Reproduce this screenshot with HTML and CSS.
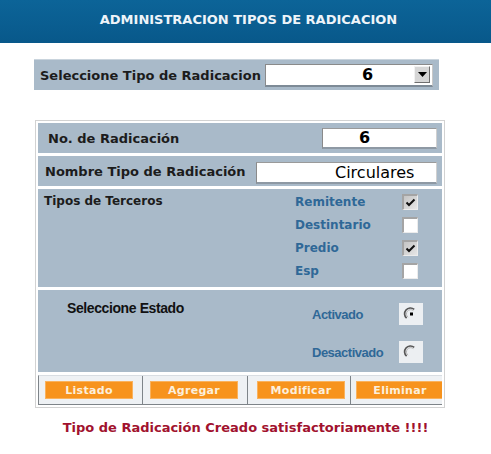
FILE: index.html
```html
<!DOCTYPE html>
<html lang="es">
<head>
<meta charset="utf-8">
<title>Administracion Tipos de Radicacion</title>
<link rel="stylesheet" href="styles.css">
</head>
<body>
<header class="topbar">
  <h1 class="title">ADMINISTRACION TIPOS DE RADICACION</h1>
</header>

<section class="selector">
  <span class="sel-label">Seleccione Tipo de Radicacion</span>
  <div class="select">
    <span class="select-value">6</span>
    <span class="select-btn"><svg width="9" height="5" viewBox="0 0 9 5"><path d="M0 0H9L4.5 5Z" fill="#000"/></svg></span>
  </div>
</section>

<div class="form">
  <div class="row row-num">
    <span class="lbl">No. de Radicación</span>
    <div class="input input-num">6</div>
  </div>
  <div class="row row-name">
    <span class="lbl">Nombre Tipo de Radicación</span>
    <div class="input input-name">Circulares</div>
  </div>
  <div class="row row-terceros">
    <span class="lbl lbl-sm">Tipos de Terceros</span>
    <ul class="opts">
      <li class="opt"><span class="opt-lbl">Remitente</span><span class="chk checked"><svg width="11" height="9" viewBox="0 0 11 9"><path d="M1.5 4.5L4 7L9.5 1.5" fill="none" stroke="#111" stroke-width="2"/></svg></span></li>
      <li class="opt"><span class="opt-lbl">Destintario</span><span class="chk"></span></li>
      <li class="opt"><span class="opt-lbl">Predio</span><span class="chk checked"><svg width="11" height="9" viewBox="0 0 11 9"><path d="M1.5 4.5L4 7L9.5 1.5" fill="none" stroke="#111" stroke-width="2"/></svg></span></li>
      <li class="opt"><span class="opt-lbl">Esp</span><span class="chk"></span></li>
    </ul>
  </div>
  <div class="row row-estado">
    <span class="lbl-arial">Seleccione Estado</span>
    <ul class="radios">
      <li class="radio-item"><span class="radio-lbl">Activado</span><span class="radio"><svg width="24" height="22" viewBox="0 0 24 22"><path d="M7.6 15.2A5.8 5.8 0 0 1 15.2 6.4" fill="none" stroke="#555" stroke-width="1.7"/><path d="M9 14.2A4.2 4.2 0 0 1 14.4 7.6" fill="none" stroke="#b4b4b4" stroke-width="1"/><rect x="11" y="9.5" width="3" height="3" fill="#000"/></svg></span></li>
      <li class="radio-item"><span class="radio-lbl">Desactivado</span><span class="radio"><svg width="24" height="22" viewBox="0 0 24 22"><path d="M7.6 15.2A5.8 5.8 0 0 1 15.2 6.4" fill="none" stroke="#555" stroke-width="1.7"/><path d="M9 14.2A4.2 4.2 0 0 1 14.4 7.6" fill="none" stroke="#b4b4b4" stroke-width="1"/></svg></span></li>
    </ul>
  </div>
  <div class="row row-actions">
    <div class="cell cell-1"><button class="btn">Listado</button></div>
    <div class="cell cell-2"><button class="btn">Agregar</button></div>
    <div class="cell cell-3"><button class="btn">Modificar</button></div>
    <div class="cell cell-4"><button class="btn">Eliminar</button></div>
  </div>
</div>

<p class="msg">Tipo de Radicación Creado satisfactoriamente !!!!</p>
</body>
</html>
```

FILE: styles.css
```css
* { box-sizing: border-box; }

body {
  margin: 0;
  background: #fff;
  font-family: "DejaVu Sans", Verdana, sans-serif;
  color: #1a1a1a;
}

.topbar {
  height: 43px;
  background: linear-gradient(180deg, #0c6498 0%, #0a5d90 60%, #08588a 100%);
  display: flex;
  align-items: center;
  justify-content: center;
  padding: 0 0 4px 6px;
}

.title {
  margin: 0;
  font-size: 13px;
  font-weight: bold;
  color: #eef4f9;
}

.selector {
  margin: 16px 0 0 34px;
  width: 405px;
  height: 31px;
  background: #a9bac9;
  border-top: 1px solid #c9d4dd;
  display: flex;
  align-items: center;
  justify-content: space-between;
  padding: 0 6px;
}

.sel-label {
  font-size: 13px;
  font-weight: bold;
  color: #1c1c1c;
}

.select {
  width: 168px;
  height: 23px;
  background: #fff;
  border-style: solid;
  border-width: 1px 1px 2px 1px;
  border-color: #8a8a8a #c8c8c8 #7d8a96 #8a8a8a;
  display: flex;
  align-items: center;
  padding-left: 96px;
  position: relative;
}

.select-value {
  font-size: 16px;
  font-weight: bold;
  color: #000;
}

.select-btn {
  position: absolute;
  right: 2px;
  top: 1px;
  width: 16px;
  height: 17px;
  background: #d6d6d6;
  border-style: solid;
  border-width: 1px;
  border-color: #f2f2f2 #6e6e6e #6e6e6e #f2f2f2;
  display: flex;
  align-items: center;
  justify-content: center;
}

.form {
  margin: 30px 0 0 35px;
  width: 410px;
  border: 1px solid #d2d2d2;
  padding: 2px;
  display: flex;
  flex-direction: column;
  gap: 3px;
}

.row {
  background: #a9bac9;
}

.row-num, .row-name {
  height: 30px;
  display: flex;
  align-items: center;
  justify-content: space-between;
  padding-right: 5px;
}

.row-num { padding-left: 10px; }
.row-name { padding-left: 7px; }

.lbl {
  font-size: 13px;
  font-weight: bold;
  color: #1c1c1c;
}

.lbl-sm {
  font-size: 12px;
  margin-top: 4px;
}

.input {
  background: #fff;
  border-style: solid;
  border-width: 1px 1px 2px 1px;
  border-color: #9a9a9a #d0d0d0 #8e99a4 #8a8a8a;
  font-size: 16px;
  color: #000;
  display: flex;
  align-items: center;
}

.input-num {
  width: 115px;
  height: 21px;
  font-weight: bold;
  padding-left: 36px;
}

.input-name {
  width: 181px;
  height: 22px;
  padding-left: 78px;
  margin-top: 3px;
}

.row-terceros {
  height: 98px;
  display: flex;
  justify-content: space-between;
  align-items: flex-start;
  padding: 1px 24px 0 6px;
}

.opts {
  list-style: none;
  margin: 0;
  padding: 0;
  width: 123px;
}

.opt {
  height: 23px;
  display: flex;
  align-items: center;
  justify-content: space-between;
}

.opt-lbl {
  font-size: 12px;
  font-weight: bold;
  color: #2f6897;
}

.chk {
  width: 16px;
  height: 16px;
  background: #fff;
  border-style: solid;
  border-width: 2px 1px 1px 2px;
  border-color: #a4a4a4 #ececec #ececec #a4a4a4;
  display: flex;
  align-items: center;
  justify-content: center;
}

.chk.checked {
  background: linear-gradient(135deg, #c4c4c4, #e6e6e6);
}

.row-estado {
  height: 82px;
  display: flex;
  justify-content: space-between;
  align-items: flex-start;
  padding: 10px 19px 0 29px;
}

.lbl-arial {
  font-family: "Liberation Sans", Arial, sans-serif;
  font-size: 14px;
  font-weight: bold;
  letter-spacing: -0.4px;
  color: #111;
}

.radios {
  list-style: none;
  margin: 0;
  padding: 3px 0 0 0;
  width: 111px;
  display: flex;
  flex-direction: column;
  gap: 16px;
}

.radio-item {
  height: 22px;
  display: flex;
  align-items: center;
  justify-content: space-between;
}

.radio-lbl {
  font-family: "Liberation Sans", Arial, sans-serif;
  font-size: 13px;
  font-weight: bold;
  letter-spacing: -0.5px;
  color: #2f6897;
}

.radio {
  width: 24px;
  height: 22px;
  background: #eceff2;
  display: block;
}

.radio svg { display: block; }

.row-actions {
  height: 30px;
  background: #eef1f4;
  display: grid;
  grid-template-columns: 104px 105px 103px 1fr;
  border-top: 1px solid #d8dde2;
  border-left: 1px solid #7e8489;
  border-bottom: 1px solid #7e8489;
  overflow: hidden;
}

.cell {
  border-right: 1px solid #7e8489;
  display: flex;
  align-items: center;
}

.cell-1 { padding-left: 6px; }
.cell-2 { padding-left: 7px; }
.cell-3 { padding-left: 9px; }
.cell-4 { padding-left: 5px; border-right: 0; }

.btn {
  width: 88px;
  height: 18px;
  flex: none;
  margin: 0;
  padding: 0;
  background: #f7931d;
  border: 1px solid #f9b25e;
  color: #fcefdc;
  font-family: "DejaVu Sans", Verdana, sans-serif;
  font-size: 11px;
  font-weight: bold;
  letter-spacing: 0.3px;
}

.msg {
  margin: 12px 0 0 0;
  text-align: center;
  font-size: 13px;
  font-weight: bold;
  color: #a1122e;
}
```
